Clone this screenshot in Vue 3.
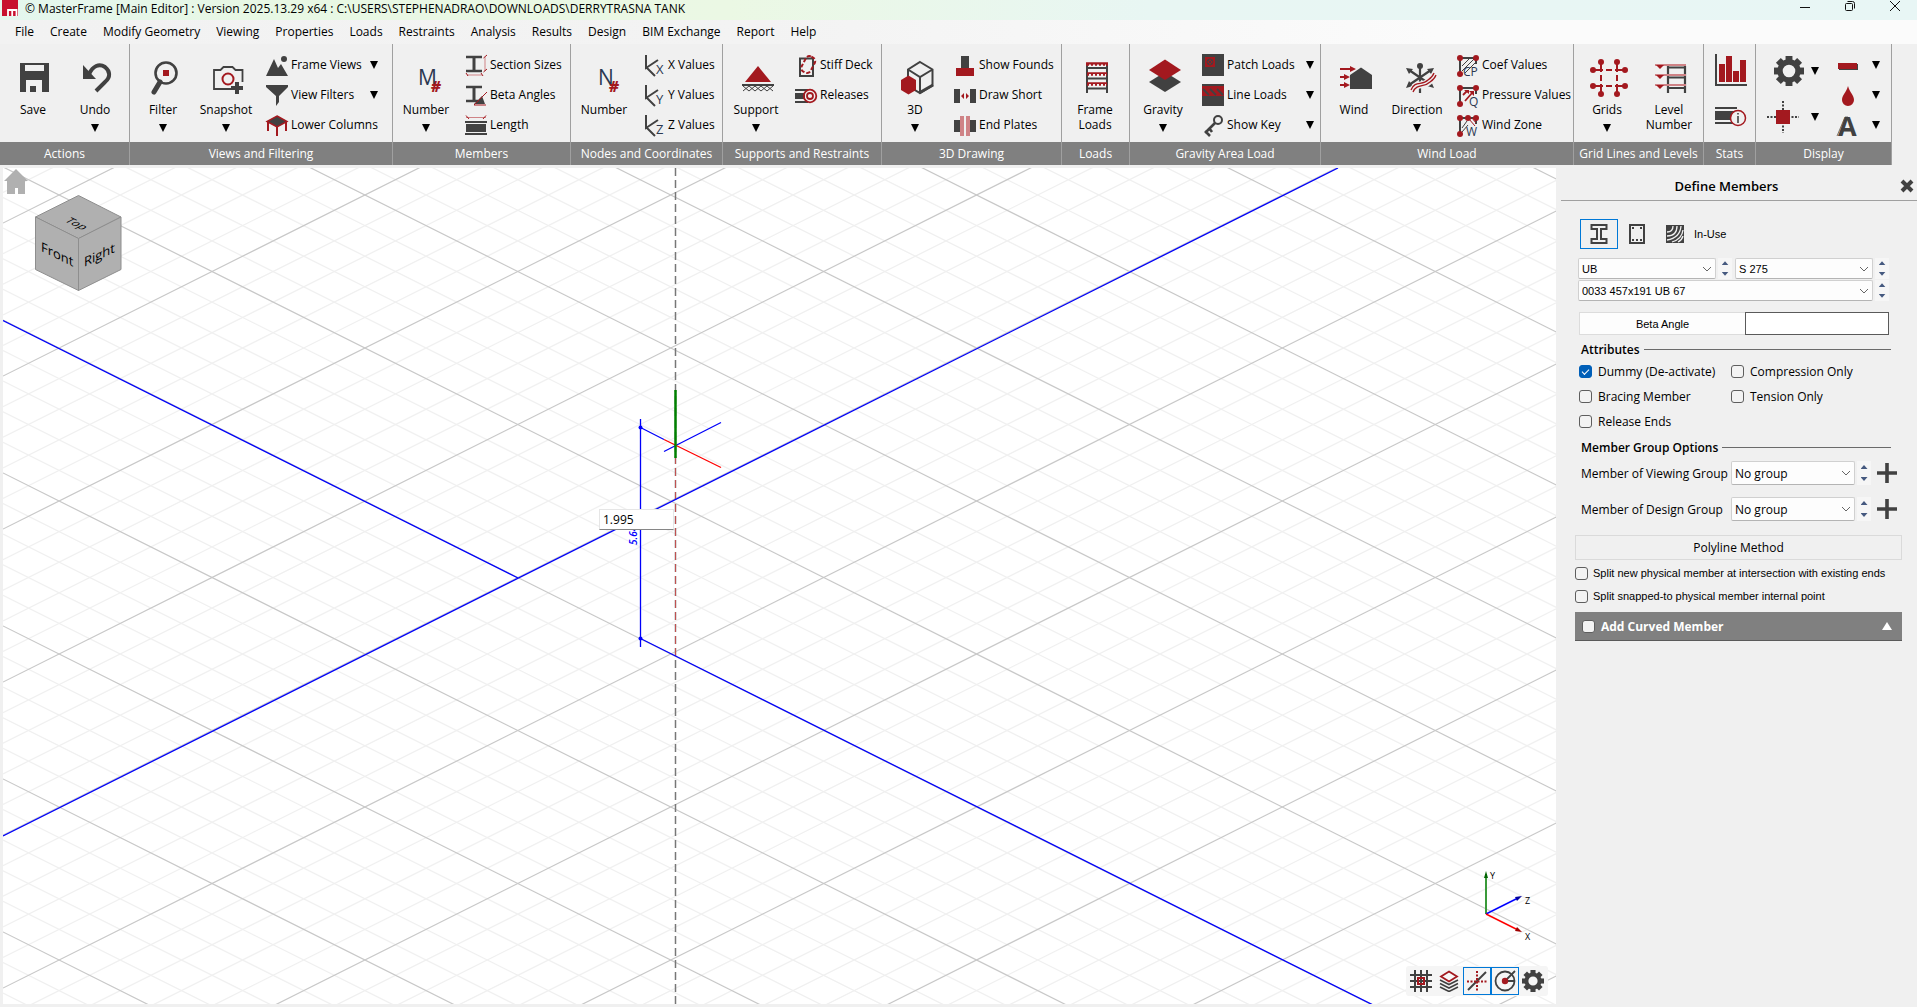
<script setup>
import { ref } from 'vue'

const D = '#414141'
const R = '#a3191f'
const P = '#cf8386'
const N = '#2b3850'
const uiFont = "font-family=\"'Open Sans', sans-serif\""

const gear = (cx, cy, r) => {
  const tooth = r * 0.46
  let teeth = ''
  for (let i = 0; i < 8; i++) {
    teeth += `<rect x="${cx - tooth / 2}" y="${cy - r}" width="${tooth}" height="${r * 0.5}" transform="rotate(${i * 45} ${cx} ${cy})"/>`
  }
  return `<g fill="${D}">${teeth}</g><circle cx="${cx}" cy="${cy}" r="${r * 0.6}" fill="none" stroke="${D}" stroke-width="${r * 0.36}"/>`
}

const axes = (letter) =>
  `<path d="M3 1V14L15 6M3 13L12 22" fill="none" stroke="${D}" stroke-width="2"/><text x="13" y="20" font-size="13" fill="${N}" ${uiFont}>${letter}</text>`

const zone = (inner, letters, x) =>
  `<path d="M3 20V4H19V10" fill="none" stroke="${D}" stroke-width="2"/>${inner}<g fill="${R}"><circle cx="3" cy="4" r="3"/><circle cx="19" cy="4" r="3"/><circle cx="3" cy="20" r="3"/></g><text x="${x}" y="22" font-size="12" fill="${N}" ${uiFont}>${letters}</text>`

const icons = {
  save: `<path fill="${D}" fill-rule="evenodd" d="M7 5H36V34H7ZM12 7V13H31V7ZM13 22V34H17V28H23V34H29V22Z"/>`,
  undo: `<path fill="${D}" d="M8 7V21H21Z"/><path d="M14 16C18 8 24 5 30 9C35 13 36 19 30 24L21 33" fill="none" stroke="${D}" stroke-width="4"/>`,
  filter: `<circle cx="23" cy="15" r="10.5" fill="none" stroke="${D}" stroke-width="2.6"/><path d="M17 24L11 34" stroke="${D}" stroke-width="5" stroke-linecap="round"/><path fill="${R}" d="M20 12H26V18H20Z"/>`,
  snapshot: `<path d="M25 31H8V12H14.500L17.500 9H26.500L29.500 12H36.500V24" fill="none" stroke="${D}" stroke-width="1.8"/><circle cx="22" cy="21" r="5.5" fill="none" stroke="${R}" stroke-width="2"/><path d="M31 24V36M25 30H37" stroke="${D}" stroke-width="4"/>`,
  memberNo: `<text x="12" y="27" font-size="21" fill="${N}" ${uiFont}>M</text><text x="25" y="34" font-size="15" font-weight="800" font-style="italic" fill="${R}" ${uiFont}>#</text>`,
  nodeNo: `<text x="14" y="27" font-size="21" fill="${N}" ${uiFont}>N</text><text x="25" y="34" font-size="15" font-weight="800" font-style="italic" fill="${R}" ${uiFont}>#</text>`,
  support: `<path fill="${R}" d="M22 8L35 24H9Z"/><path d="M6 27H38" stroke="${D}" stroke-width="2"/><path d="M7 28L13 33L19 28L25 33L31 28L37 33M7 33L13 28L19 33L25 28L31 33L37 28" fill="none" stroke="${D}"/>`,
  cube: `<path d="M25 4L37.500 11.500V27.500L25 35L13 28V11.500ZM13 11.500L25 19L37.500 11.500M25 19V35" fill="none" stroke="${D}" stroke-width="2"/><path d="M24 35L38 27" stroke="${D}" stroke-width="3"/><path fill="${R}" d="M13.500 17.500L21 22V32L13.500 36.500L6 32V22Z"/>`,
  frame: `<path d="M12 5V35M32 5V35M12 10H32M12 20.500H32M12 30.500H32" stroke="${D}" stroke-width="2"/><path d="M11 6H33M12 16H32M12 26H32" stroke="${R}" stroke-width="3.500"/><path d="M14 7.500H31M14 17H31M14 27H31" stroke="#f0f0f0" stroke-width="2" stroke-dasharray="2 2"/>`,
  gravity: `<path fill="${D}" d="M22 14L38 24L22 34L6 24Z"/><path fill="${R}" d="M22 1.500L38 12L22 22L6 12Z"/>`,
  wind: `<path fill="${D}" d="M27 9.500L38 17V31H16V17Z"/><g stroke="${R}" stroke-width="2"><path d="M6 11H18M6 19H12M6 27H12"/></g><path fill="${R}" d="M16 8L22 11L16 14ZM10 16L16 19L10 22ZM10 24L16 27L10 30Z"/>`,
  direction: `<g stroke="${D}" stroke-width="2"><path d="M23 8V24M23 29V35M12 12L34 27M34 12L12 27" stroke-width="2.200"/></g><circle cx="23" cy="8" r="3" fill="${D}"/><path fill="${D}" d="M9 10L16 11L12 16ZM37 10L30 11L34 16ZM9 30L16 28L12 23ZM37 30L30 28L34 23Z"/><path d="M14 32C18 22 25 28 31 22C34 20 36 18 37 15M16 35C20 25 27 31 33 25C36 23 38 20 38 17" fill="none" stroke="#f0f0f0" stroke-width="3.500"/><path d="M14 32C18 22 25 28 31 22C34 20 36 18 37 15M16 34C20 25 27 30 33 24C36 22 38 20 39 17" fill="none" stroke="${R}" stroke-width="1.300"/>`,
  grids: `<path d="M14 4V36M30 4V36M6 12H38M6 28H38" stroke="${R}" stroke-width="2" stroke-dasharray="10 3 6 3"/><g fill="${R}"><circle cx="14" cy="4" r="3"/><circle cx="30" cy="4" r="3"/><circle cx="14" cy="36" r="3"/><circle cx="30" cy="36" r="3"/><circle cx="6" cy="12" r="3"/><circle cx="38" cy="12" r="3"/><circle cx="6" cy="28" r="3"/><circle cx="38" cy="28" r="3"/></g>`,
  level: `<path d="M19 8V35M36 8V35M19 9.500H36M19 19.500H36M19 30H36" stroke="${D}" stroke-width="2.200" fill="none"/><path d="M6 7H37M6 17H37M6 27H37" stroke="${P}" stroke-width="2"/><path fill="${R}" d="M7 7H15L11 11ZM7 17H15L11 21ZM7 27H15L11 31Z"/>`,

  frameViews: `<path fill="${D}" d="M0 22L8 5L12 14L15 10L22 22Z"/><circle cx="18" cy="5" r="3" fill="${D}"/>`,
  viewFilters: `<path fill="${D}" d="M0 1H22V3L13 12V18L10 22V12L0 3Z"/>`,
  lowerColumns: `<path d="M2 8V17M11 13V22M20 8V17" stroke="${R}" stroke-width="2"/><path d="M11 2L21 7.500L11 13L1 7.500Z" fill="${D}" stroke="${R}" stroke-width="1.500"/>`,
  sectionSizes: `<path d="M1 3H17M1 17H17" stroke="${D}" stroke-width="2.600"/><path d="M9 3V17" stroke="${D}" stroke-width="3"/><path d="M20 3V17M2 21H17" stroke="${P}"/><path d="M18.500 4L22 1M18.500 18L22 15M1 19L3 22M16 19L18 22" stroke="${R}"/>`,
  betaAngles: `<path d="M1 3H17M1 17H13" stroke="${D}" stroke-width="2.600"/><path d="M9 3V17" stroke="${D}" stroke-width="3"/><path fill="${D}" d="M17 12L20 20H9Z"/><path d="M9 21L22 8M9 21H21" stroke="${R}"/>`,
  length: `<path d="M1 3.500H21" stroke="${P}"/><path d="M1 1.500L4 5M18 5L21 1.500" stroke="${R}"/><path fill="${D}" d="M0 7H22V9H0ZM1 10H21V18H1ZM0 19H22V21H0Z"/>`,
  xValues: axes('X'),
  yValues: axes('Y'),
  zValues: axes('Z'),
  stiffDeck: `<path d="M5 4.500H18V22H5Z" fill="none" stroke="${D}" stroke-width="2"/><rect x="8" y="2" width="10" height="17" rx="4" transform="rotate(28 13 11)" fill="none" stroke="${R}" stroke-width="2" stroke-dasharray="4 2"/>`,
  releases: `<path fill="${D}" d="M0 5H13V7H0ZM0 9H10V15H0ZM0 17H13V19H0Z"/><circle cx="15" cy="12" r="6.300" fill="none" stroke="${R}" stroke-width="1.800"/><circle cx="15" cy="12" r="3" fill="none" stroke="${R}" stroke-width="1.800"/>`,
  showFounds: `<path fill="${D}" d="M7 2H15V14H7Z"/><path fill="${R}" d="M2 14H20V22H2Z"/>`,
  drawShort: `<path fill="${D}" d="M0 5H6V19H0ZM16 5H22V19H16Z"/><path fill="${R}" d="M7 12L10 9V15ZM15 12L12 9V15Z"/>`,
  endPlates: `<path fill="${D}" d="M0 6H7V18H0ZM15 6H22V18H15Z"/><path fill="${P}" d="M6 2H10V22H6ZM12 2H16V22H12Z"/>`,
  patchLoads: `<path fill="${D}" d="M0 0H22V22H0Z"/><path fill="${R}" d="M3 3H13V13H3Z"/><circle cx="8" cy="8" r="3" fill="none" stroke="${D}"/><path d="M6 6L10 10M10 6L6 10" stroke="${D}"/>`,
  lineLoads: `<path fill="${D}" d="M0 0H22V22H0Z"/><path fill="${R}" d="M0 2H22V12H0Z"/><path d="M1 5L7 11M8 5L14 11M15 5L21 11" stroke="${D}" stroke-width="1.800"/>`,
  showKey: `<circle cx="16" cy="6" r="4" fill="none" stroke="${D}" stroke-width="2"/><path d="M13 9L3 19M3 17L8 22M7 14L10 18" stroke="${D}" stroke-width="2.600" fill="none"/>`,
  coef: zone(`<path d="M5 12L12 5M5 17L17 5M8 19L18 9" stroke="${D}"/>`, 'CP', 6),
  pressure: zone(`<path d="M6 11L10 7M8 17L15 9" stroke="${R}" stroke-width="1.800"/><path fill="${R}" d="M7 6H12V10ZM12 7H17V12Z"/>`, 'Q', 12),
  windZone: zone(`<path d="M5 14L10 7M5 18L11 11" stroke="${D}"/><path d="M12 5L18 12M15 4L19 9" stroke="${R}"/><circle cx="11" cy="4" r="3" fill="${R}"/>`, 'W', 9),

  chart: `<path d="M5 4V35H36" fill="none" stroke="${D}" stroke-width="2"/><path fill="${R}" d="M8 14H14V32H8ZM15 6H21V32H15ZM22 21H28V32H22ZM29 10H35V32H29Z"/>`,
  beamInfo: `<path fill="${D}" d="M4 11H26V13H4ZM4 15H24V24H4ZM4 26H24V28H4Z"/><circle cx="27" cy="22" r="7.500" fill="#f0f0f0" stroke="${R}" stroke-width="1.500"/><path d="M27 20V27M27 17V18.500" stroke="${D}" stroke-width="1.600"/>`,
  settings: gear(22, 21, 15),
  node: `<path d="M16 5V37M0 21H32" stroke="${D}" stroke-width="2" stroke-dasharray="2 1.500"/><path fill="${R}" d="M9 14H23V28H9Z"/>`,
  bar: `<path fill="${D}" d="M1 10H20V16H1Z"/><path fill="${R}" d="M0 9H19V15H0Z"/>`,
  drop: `<path fill="${R}" d="M10 2C12 9 16 11 16 16A6 6 0 0 1 4 16C4 11 8 9 10 2Z"/>`,
  letterA: `<path d="M-1 22L7 3H10" fill="none" stroke="#777"/><text x="0" y="22" font-size="27" font-weight="700" fill="${D}" ${uiFont}>A</text>`,

  gridSnap: `<path d="M5 0V22M11 0V22M17 0V22M0 5H22M0 11H22M0 17H22" stroke="${D}" stroke-width="2"/><path d="M8 8H14V14H8Z" fill="none" stroke="${R}" stroke-width="2"/>`,
  layers: `<path d="M2 10L11 14.500L20 10M2 13.500L11 18L20 13.500M2 17L11 21.500L20 17" fill="none" stroke="${D}" stroke-width="1.600"/><path d="M11 1.500L19 6.500L11 11.500L3 6.500Z" fill="#f8f8f8" stroke="${R}" stroke-width="1.800"/>`,
  lineSnap: `<path d="M2 20L20 2" stroke="${D}" stroke-width="2"/><path d="M11 1V22M1 11.500H22" stroke="${R}" stroke-width="2" stroke-dasharray="2 1.500"/>`,
  polar: `<circle cx="11" cy="11" r="9.500" fill="none" stroke="${D}" stroke-width="1.800"/><path d="M11 11L21 1M13 11H21" stroke="${D}" stroke-width="1.800"/><circle cx="11" cy="11" r="3.200" fill="${R}"/>`,
  gearSmall: gear(11, 11, 11),
}

const menus = ['File', 'Create', 'Modify Geometry', 'Viewing', 'Properties', 'Loads', 'Restraints', 'Analysis', 'Results', 'Design', 'BIM Exchange', 'Report', 'Help']

const groups = [
  { label: 'Actions', width: 130, big: [{ icon: 'save', text: 'Save' }, { icon: 'undo', text: 'Undo', menu: true }] },
  {
    label: 'Views and Filtering', width: 263,
    big: [{ icon: 'filter', text: 'Filter', menu: true }, { icon: 'snapshot', text: 'Snapshot', menu: true }],
    small: [{ icon: 'frameViews', text: 'Frame Views', menu: true }, { icon: 'viewFilters', text: 'View Filters', menu: true }, { icon: 'lowerColumns', text: 'Lower Columns' }],
  },
  {
    label: 'Members', width: 178,
    big: [{ icon: 'memberNo', text: 'Number', menu: true }],
    small: [{ icon: 'sectionSizes', text: 'Section Sizes' }, { icon: 'betaAngles', text: 'Beta Angles' }, { icon: 'length', text: 'Length' }],
  },
  {
    label: 'Nodes and Coordinates', width: 152,
    big: [{ icon: 'nodeNo', text: 'Number' }],
    small: [{ icon: 'xValues', text: 'X Values' }, { icon: 'yValues', text: 'Y Values' }, { icon: 'zValues', text: 'Z Values' }],
  },
  {
    label: 'Supports and Restraints', width: 159,
    big: [{ icon: 'support', text: 'Support', menu: true }],
    small: [{ icon: 'stiffDeck', text: 'Stiff Deck' }, { icon: 'releases', text: 'Releases' }],
  },
  {
    label: '3D Drawing', width: 180,
    big: [{ icon: 'cube', text: '3D', menu: true }],
    small: [{ icon: 'showFounds', text: 'Show Founds' }, { icon: 'drawShort', text: 'Draw Short' }, { icon: 'endPlates', text: 'End Plates' }],
  },
  { label: 'Loads', width: 68, big: [{ icon: 'frame', text: 'Frame Loads' }] },
  {
    label: 'Gravity Area Load', width: 191,
    big: [{ icon: 'gravity', text: 'Gravity', menu: true }],
    small: [{ icon: 'patchLoads', text: 'Patch Loads', menu: true }, { icon: 'lineLoads', text: 'Line Loads', menu: true }, { icon: 'showKey', text: 'Show Key', menu: true }],
  },
  {
    label: 'Wind Load', width: 253,
    big: [{ icon: 'wind', text: 'Wind' }, { icon: 'direction', text: 'Direction', menu: true }],
    small: [{ icon: 'coef', text: 'Coef Values' }, { icon: 'pressure', text: 'Pressure Values' }, { icon: 'windZone', text: 'Wind Zone' }],
  },
  { label: 'Grid Lines and Levels', width: 130, big: [{ icon: 'grids', text: 'Grids', menu: true }, { icon: 'level', text: 'Level Number' }] },
  { label: 'Stats', width: 52, pair: [{ icon: 'chart', title: 'Statistics' }, { icon: 'beamInfo', title: 'Member information' }] },
  {
    label: 'Display', width: 136,
    pair: [{ icon: 'settings', title: 'Display settings', menu: true }, { icon: 'node', title: 'Node display', menu: true }],
    small: [{ icon: 'bar', title: 'Member display', menu: true }, { icon: 'drop', title: 'Colour', menu: true }, { icon: 'letterA', title: 'Font', menu: true }],
  },
]

// Isometric grid: both line families pass through the crossing at (209, 103.5).
const slope = 0.5003
const far = 4000
const rising = []
const falling = []
for (let i = -70; i <= 130; i++) {
  const major = i % 5 === 0
  const down = 103.5 - slope * 209 + i * 30.6
  const up = 103.5 + slope * 209 + i * 30.6
  falling.push({ major, y1: down, y2: down + slope * far })
  rising.push({ major, y1: up, y2: up - slope * far })
}
const gridLines = [...falling, ...rising].sort((a, b) => a.major - b.major)

const viewTools = [
  { icon: 'gridSnap', title: 'Grid snap' },
  { icon: 'layers', title: 'Layers' },
  { icon: 'lineSnap', title: 'Line snap', on: true },
  { icon: 'polar', title: 'Polar tracking', on: true },
  { icon: 'gearSmall', title: 'View settings' },
]

const sectionRows = [
  [{ id: 'type', name: 'Section type', value: 'UB' }, { id: 'grade', name: 'Steel grade', value: 'S 275' }],
  [{ id: 'size', name: 'Section size', value: '0033 457x191 UB 67' }],
]
const attributes = ref([
  { id: 'dummy', text: 'Dummy (De-activate)', on: true },
  { id: 'compression', text: 'Compression Only', on: false },
  { id: 'bracing', text: 'Bracing Member', on: false },
  { id: 'tension', text: 'Tension Only', on: false },
  { id: 'release', text: 'Release Ends', on: false },
])
const memberGroups = [
  { id: 'viewing', text: 'Member of Viewing Group' },
  { id: 'design', text: 'Member of Design Group' },
]
const splits = ref([
  { id: 'split-new', text: 'Split new physical member at intersection with existing ends', on: false },
  { id: 'split-snap', text: 'Split snapped-to physical member internal point', on: false },
])
const length = ref('1.995')
const beta = ref('')
const curved = ref(false)
</script>

<template>
  <div class="app">
    <header class="titlebar">
      <svg class="logo" width="16" height="16" viewBox="0 0 16 16">
        <path fill="#c8102e" d="M0 0H16V16H0Z" />
        <path d="M6 16V10H14.500V16M10.200 10V16" fill="none" stroke="#fff" stroke-width="1.800" />
      </svg>
      <span class="title">© MasterFrame [Main Editor] : Version 2025.13.29 x64 : C:\USERS\STEPHENADRAO\DOWNLOADS\DERRYTRASNA TANK</span>
      <div class="window-buttons">
        <button type="button" aria-label="Minimize"><svg width="12" height="12" viewBox="0 0 12 12"><path d="M1 7.500H11" /></svg></button>
        <button type="button" aria-label="Restore"><svg width="12" height="12" viewBox="0 0 12 12"><path d="M1.500 4.500Q1.500 3.500 2.500 3.500H7.500Q8.500 3.500 8.500 4.500V9.500Q8.500 10.500 7.500 10.500H2.500Q1.500 10.500 1.500 9.500ZM3.500 1.500H8.500Q10.500 1.500 10.500 3.500V8.500" /></svg></button>
        <button type="button" aria-label="Close"><svg width="12" height="12" viewBox="0 0 12 12"><path d="M1 1L11 11M11 1L1 11" /></svg></button>
      </div>
    </header>

    <nav class="menubar">
      <button v-for="m in menus" :key="m" type="button">{{ m }}</button>
    </nav>

    <div class="ribbon">
      <section v-for="g in groups" :key="g.label" class="group" :style="{ width: g.width + 'px' }">
        <div class="tools">
          <button v-for="b in g.big" :key="b.text" type="button" class="big" :class="{ long: b.text.length > 7 && !b.text.includes(' ') }">
            <svg width="40" height="40" viewBox="0 0 40 40" v-html="icons[b.icon]" />
            <span>{{ b.text }}</span>
            <i v-if="b.menu" class="arrow" />
          </button>
          <div v-if="g.pair" class="pair">
            <button v-for="b in g.pair" :key="b.icon" type="button" :aria-label="b.title">
              <svg width="40" height="42" viewBox="0 0 40 42" v-html="icons[b.icon]" />
              <i v-if="b.menu" class="arrow" />
            </button>
          </div>
          <div v-if="g.small" class="small" :class="{ wide: g.small.some((b) => b.menu && b.text), bare: g.pair }">
            <button v-for="b in g.small" :key="b.icon" type="button" :aria-label="b.title">
              <svg width="22" height="22" viewBox="0 0 22 22" v-html="icons[b.icon]" />
              <span v-if="b.text">{{ b.text }}</span>
              <i v-if="b.menu" class="arrow" />
            </button>
          </div>
        </div>
        <h2>{{ g.label }}</h2>
      </section>
    </div>

    <main class="workspace">
      <div class="view">
        <svg class="scene">
          <line v-for="(l, i) in gridLines" :key="i" x1="0" :x2="far" :y1="l.y1" :y2="l.y2" :class="l.major ? 'major' : 'minor'" />
          <line x1="672.5" y1="0" x2="672.5" y2="100%" class="guide" />
          <line x1="672.5" y1="290" x2="672.5" y2="488" class="guide-hot" />
          <g class="member">
            <path d="M0 152.500L515 410M0 668L1335 0M637.500 470.500L2637.500 1471" />
            <path d="M637.500 251V479M637.500 259.500L661 271.500M661 283.500L718 254.500" />
          </g>
          <circle cx="637.5" cy="259.5" r="2" fill="#00f" />
          <circle cx="637.5" cy="470.5" r="2" fill="#00f" />
          <path d="M661 271.500L718 299.500" stroke="#f00" stroke-width="1.300" />
          <path d="M672.500 222V290" stroke="#008000" stroke-width="2.500" />
          <text transform="translate(634 377) rotate(-90)" class="dim">5.643</text>

          <g fill="#b0b0b0">
            <path d="M13 1L25 13H22V26H15V20H12V26H4V13H1Z" />
            <g stroke="#8e8e8e" stroke-linejoin="round">
              <path d="M75.500 27.500L118 49L75.500 70.500L32.500 49Z" />
              <path d="M32.500 49L75.500 70.500V122.500L32.500 101.500Z" />
              <path d="M118 49L75.500 70.500V122.500L118 101.500Z" />
            </g>
          </g>
          <g class="cube-text">
            <text transform="translate(38 83) skewY(26)">Front</text>
            <text transform="translate(81 99) skewY(-26)">Right</text>
            <text transform="matrix(0.8 0.4 -0.8 0.4 61 53)">Top</text>
          </g>
        </svg>
        <input v-model="length" class="length" aria-label="Length">
        <svg class="triad" width="60" height="80" viewBox="0 0 60 80">
          <path d="M10 48V8" stroke="#3a9a3a" stroke-width="2" />
          <path d="M10 5L12 12H8Z" fill="#006400" />
          <path d="M10 48L42 32" stroke="#00f" stroke-width="1.500" />
          <path d="M46 30L41 35L39 31Z" fill="#0000a0" />
          <path d="M10 48L42 64" stroke="#f00" stroke-width="1.500" />
          <path d="M46 66L39 65L41 61Z" fill="#a00000" />
          <text x="14" y="13">Y</text>
          <text x="49" y="38">Z</text>
          <text x="49" y="74">X</text>
        </svg>
        <div class="view-tools">
          <button v-for="t in viewTools" :key="t.icon" type="button" :class="{ on: t.on }" :aria-label="t.title">
            <svg width="22" height="22" viewBox="0 0 22 22" v-html="icons[t.icon]" />
          </button>
        </div>
      </div>

      <aside class="panel">
        <div class="panel-head">
          <h1>Define Members</h1>
          <button type="button" aria-label="Close panel">
            <svg width="14" height="14" viewBox="0 0 14 14"><path d="M2 2L12 12M12 2L2 12" stroke="#414141" stroke-width="4" /></svg>
          </button>
        </div>

        <div class="materials">
          <button type="button" class="on" aria-label="Steel">
            <svg width="20" height="22" viewBox="0 0 20 22"><path d="M2.500 2H17.500V6H12V16H17.500V20H2.500V16H8V6H2.500Z" fill="none" stroke="#414141" stroke-width="2" /></svg>
          </button>
          <button type="button" aria-label="Concrete">
            <svg width="20" height="22" viewBox="0 0 20 22"><path d="M3 2H17V20H3Z" fill="none" stroke="#414141" stroke-width="2" /><path d="M5 4H7V6H5ZM13 4H15V6H13ZM5 16H7V18H5ZM9 16H11V18H9ZM13 16H15V18H13Z" fill="#414141" /></svg>
          </button>
          <button type="button" aria-label="Timber">
            <svg width="20" height="22" viewBox="0 0 20 22"><path d="M1 2H19V20H1Z" fill="#414141" /><path d="M8 3Q8 9 2 9M12 3Q12 13 2 13M16 3Q15 15 2 17M18 7Q17 16 7 19M18 13Q17 17 13 19" fill="none" stroke="#f0f0f0" stroke-width="1.300" /></svg>
          </button>
          <span class="compact">In-Use</span>
        </div>

        <div class="sections">
          <div v-for="(row, i) in sectionRows" :key="i" class="section-row">
            <div v-for="c in row" :key="c.id" class="combo compact">
              <div class="select">
                <select :id="c.id" :aria-label="c.name"><option>{{ c.value }}</option></select>
                <svg width="10" height="6" viewBox="0 0 10 6"><path d="M1 1L5 5L9 1" /></svg>
              </div>
              <div class="spin">
                <button type="button" aria-label="Previous"><i /></button>
                <button type="button" aria-label="Next"><i class="down" /></button>
              </div>
            </div>
          </div>
        </div>

        <div class="beta compact">
          <label for="beta">Beta Angle</label>
          <input id="beta" v-model="beta">
        </div>

        <h3 class="rule">Attributes</h3>
        <div class="attributes">
          <label v-for="a in attributes" :key="a.id" class="check">
            <input v-model="a.on" type="checkbox"><span>{{ a.text }}</span>
          </label>
        </div>

        <h3 class="rule">Member Group Options</h3>
        <div v-for="m in memberGroups" :key="m.id" class="member-group">
          <label :for="m.id">{{ m.text }}</label>
          <div class="combo">
            <div class="select">
              <select :id="m.id"><option>No group</option></select>
              <svg width="10" height="6" viewBox="0 0 10 6"><path d="M1 1L5 5L9 1" /></svg>
            </div>
            <div class="spin">
              <button type="button" aria-label="Previous"><i /></button>
              <button type="button" aria-label="Next"><i class="down" /></button>
            </div>
          </div>
          <button type="button" class="add" aria-label="Add group">
            <svg width="20" height="20" viewBox="0 0 20 20"><path d="M10 0V20M0 10H20" stroke="#414141" stroke-width="3.600" /></svg>
          </button>
        </div>

        <div class="wide-block">
          <button type="button" class="polyline">Polyline Method</button>
          <label v-for="s in splits" :key="s.id" class="check compact split">
            <input v-model="s.on" type="checkbox"><span>{{ s.text }}</span>
          </label>
          <div class="curved">
            <label class="check"><input v-model="curved" type="checkbox"><span>Add Curved Member</span></label>
            <button type="button" aria-label="Collapse"><i /></button>
          </div>
        </div>
      </aside>
    </main>
  </div>
</template>

<style>
body {
  margin: 0;
}
</style>

<style scoped>
* {
  box-sizing: border-box;
}

.app {
  display: flex;
  flex-direction: column;
  min-height: 100vh;
  background: #f0f0f0;
  color: #000;
  font: 12px/15px "Open Sans", "Noto Sans", sans-serif;
  overflow: hidden;
}

button {
  display: flex;
  align-items: center;
  padding: 0;
  border: 0;
  background: none;
  color: inherit;
  font: inherit;
}

svg {
  display: block;
  flex: none;
}

h1, h2, h3 {
  margin: 0;
}

.titlebar {
  display: flex;
  height: 20px;
  padding-left: 2px;
  background: linear-gradient(90deg, #e4f6ee, #e8f8e4 14%, #ebf8e4 38%, #e8f6f3 60%, #e8f6f5);
}

.title {
  margin-left: 7px;
  line-height: 17px;
  white-space: nowrap;
}

.window-buttons {
  display: flex;
  margin-left: auto;
  padding-right: 16px;
  gap: 33px;
  align-items: flex-start;
}

.window-buttons path {
  fill: none;
  stroke: #111;
}

.menubar {
  display: flex;
  height: 24px;
  padding: 0 0 2px 15px;
  gap: 16px;
  background: linear-gradient(90deg, #f2f2f2, #f3f3f3 40%, #fbfbfb 75%);
}

.menubar button {
  white-space: nowrap;
}

.ribbon {
  display: flex;
}

.group {
  flex: none;
  border-right: 1px solid #a0a0a0;
}

.tools {
  display: flex;
  height: 98px;
  padding-left: 2px;
}

.group h2 {
  height: 23px;
  background: #808080;
  color: #fff;
  font-size: 12px;
  font-weight: 400;
  line-height: 24px;
  text-align: center;
  white-space: nowrap;
}

.big {
  flex: none;
  flex-direction: column;
  width: 62px;
  padding-top: 14px;
}

.big.long {
  width: 64px;
}

.big svg {
  margin-bottom: 4px;
  overflow: visible;
}

.arrow {
  width: 8px;
  height: 8px;
  background: #000;
  clip-path: polygon(0 0, 100% 0, 50% 100%);
}

.big .arrow {
  margin-top: 7px;
}

.small {
  display: flex;
  flex-direction: column;
  margin-left: 8px;
  padding-top: 6px;
}

.small.wide {
  width: 112px;
}

.small button {
  height: 30px;
  gap: 3px;
  white-space: nowrap;
}

.small span {
  padding-bottom: 2px;
}

.small svg {
  overflow: visible;
}

.small .arrow {
  margin-left: auto;
}

.small.bare {
  width: 42px;
}

.pair {
  display: flex;
  flex-direction: column;
  padding: 4px 0 0 5px;
}

.pair button {
  height: 46px;
  gap: 4px;
}

.pair + .small {
  margin-left: 19px;
}

.group:has(.bare) .tools {
  padding-left: 6px;
}

.workspace {
  display: flex;
  flex: 1;
  padding: 3px 0 3px 3px;
}

.view {
  position: relative;
  flex: 1;
  min-width: 0;
  overflow: hidden;
  background: #fff;
}

.scene {
  position: absolute;
  width: 100%;
  height: 100%;
}

.minor {
  stroke: #f0f0f0;
  stroke-width: 1.3;
}

.major {
  stroke: #c8c8c8;
  stroke-width: 1.2;
}

.guide {
  stroke: #777;
  stroke-dasharray: 8 4;
  stroke-width: 1.5;
}

.guide-hot {
  stroke: #c05050;
  stroke-dasharray: 8 4;
  stroke-dashoffset: 2;
}

.member {
  fill: none;
  stroke: #0000fa;
  stroke-width: 1.3;
}

.dim {
  fill: #00f;
  font-size: 10px;
  font-style: italic;
  font-weight: 600;
}

.cube-text {
  font-size: 13px;
  font-weight: 500;
}

.length {
  position: absolute;
  left: 596px;
  top: 341px;
  width: 75px;
  height: 21px;
  padding: 0 3px;
  border: 1px solid #e6e6e6;
  border-bottom-color: #868686;
  background: #fff;
  font: 12px "Open Sans", sans-serif;
}

.triad {
  position: absolute;
  right: 20px;
  bottom: 58px;
  font-size: 9px;
}

.view-tools {
  position: absolute;
  right: 8px;
  bottom: 8px;
  display: flex;
  padding: 1px;
  border-radius: 3px;
  background: #f5f5f5;
}

.view-tools button {
  justify-content: center;
  width: 28px;
  height: 28px;
}

.view-tools .on {
  border: 1px solid #0078d7;
}

.panel {
  width: 361px;
  padding: 0 28px 0 22px;
}

.panel-head {
  display: flex;
  align-items: center;
  height: 33px;
  margin: 0 -28px 0 -17px;
  padding: 3px 3px 0 0;
  border-bottom: 1px solid #a0a0a0;
}

.panel-head h1 {
  flex: 1;
  padding-right: 8px;
  font-size: 13px;
  font-weight: 600;
  line-height: 18px;
  text-align: center;
}

.materials {
  display: flex;
  align-items: center;
  margin: 18px 0 9px 2px;
}

.materials button {
  justify-content: center;
  width: 38px;
  height: 30px;
}

.materials .on {
  border: 1px solid #0078d7;
}

.compact,
.compact select {
  font-family: "Liberation Sans", Arial, sans-serif;
  font-size: 11px;
}

.sections {
  display: grid;
  gap: 1px;
}

.section-row {
  display: flex;
  gap: 3px;
}

.combo {
  display: flex;
  flex: 1;
  gap: 2px;
  height: 21px;
}

.select {
  position: relative;
  flex: 1;
}

.select select {
  display: block;
  width: 100%;
  height: 100%;
  padding: 0 4px 0 3px;
  appearance: none;
  border: 1px solid #d0d0d0;
  border-bottom-color: #b4b4b4;
  border-radius: 2px;
  background: #fdfdfd;
  color: #000;
}

.select svg {
  position: absolute;
  right: 4px;
  top: calc(50% - 3px);
  pointer-events: none;
}

.select path {
  fill: none;
  stroke: #666;
}

.spin {
  display: flex;
  flex-direction: column;
  width: 14px;
  background: #f6f6f6;
}

.spin button {
  flex: 1;
  justify-content: center;
}

.spin i {
  width: 7px;
  height: 4px;
  background: #45597f;
  clip-path: polygon(50% 0, 100% 100%, 0 100%);
}

.spin .down {
  clip-path: polygon(0 0, 100% 0, 50% 100%);
}

.beta {
  display: flex;
  height: 23px;
  margin: 11px 0 7px 1px;
}

.beta label {
  width: 166px;
  border: 1px solid #dcdcdc;
  border-right: 0;
  background: #fdfdfd;
  line-height: 22px;
  text-align: center;
}

.beta input {
  flex: 1;
  min-width: 0;
  border: 1px solid #5a5a5a;
  background: #fff;
}

.rule {
  display: flex;
  align-items: center;
  margin: 0 -2px 0 3px;
  font-size: 12px;
  font-weight: 600;
  line-height: 15px;
  gap: 4px;
}

.rule::after {
  flex: 1;
  height: 1px;
  background: #6a6a6a;
  content: "";
}

.attributes {
  display: grid;
  grid-template-columns: 152px 1fr;
  margin: 2px 0 6px 1px;
}

.check {
  display: flex;
  align-items: center;
  gap: 6px;
  height: 25px;
  white-space: nowrap;
}

.check input {
  flex: none;
  width: 13px;
  height: 13px;
  margin: 0;
  appearance: none;
  border: 1px solid #5e5e5e;
  border-radius: 3px;
  background: #f3f3f3;
}

.check input:checked {
  border-color: #005fb8;
  background: #005fb8;
}

.check input:checked::after {
  display: block;
  width: 6px;
  height: 3px;
  margin: 3px 0 0 2px;
  border: solid #fff;
  border-width: 0 0 1px 1px;
  transform: rotate(-45deg);
  content: "";
}

.member-group {
  display: flex;
  align-items: center;
  margin: 6px -8px 12px 3px;
}

.member-group + .member-group {
  margin-top: 0;
}

.member-group > label {
  width: 150px;
  white-space: nowrap;
}

.member-group .combo {
  height: 24px;
}

.member-group select {
  font: inherit;
}

.add {
  margin-left: 6px;
}

.wide-block {
  margin: 0 -13px 0 -3px;
}

.polyline {
  justify-content: center;
  width: 100%;
  height: 25px;
  margin: 14px 0 2px;
  border: 1px solid #dadada;
}

.split {
  gap: 5px;
  height: 23px;
}

.curved {
  display: flex;
  align-items: center;
  justify-content: space-between;
  height: 29px;
  margin-top: 4px;
  padding: 0 10px 0 7px;
  border-bottom: 1px solid #5a5a5a;
  background: #808080;
  color: #fff;
  font-weight: 700;
}

.curved i {
  width: 10px;
  height: 8px;
  background: #fff;
  clip-path: polygon(50% 0, 100% 100%, 0 100%);
}
</style>
